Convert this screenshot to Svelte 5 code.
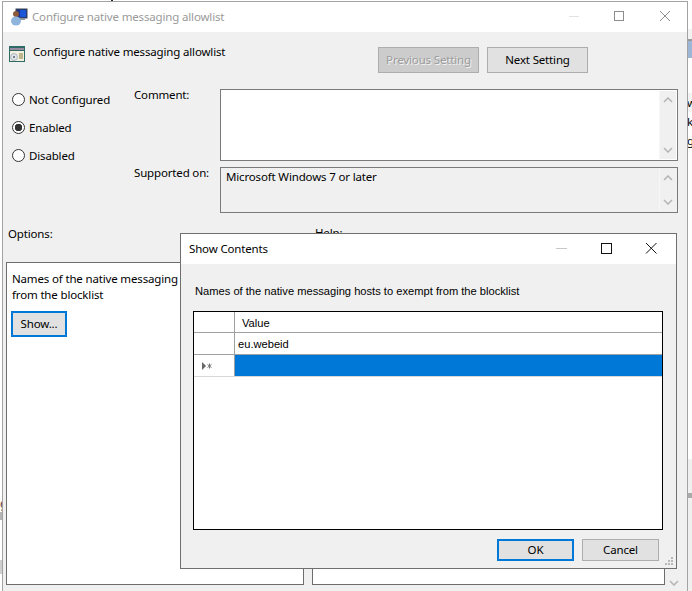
<script>
  const radios = [
    { label: 'Not Configured', on: false },
    { label: 'Enabled', on: true },
    { label: 'Disabled', on: false }
  ];
</script>

{#snippet scrollbar()}
  <div class="scroll">
    <svg width="10" height="6" viewBox="0 0 10 6"><path d="M1 5l4-4 4 4" /></svg>
    <svg width="10" height="6" viewBox="0 0 10 6"><path d="M1 1l4 4 4-4" /></svg>
  </div>
{/snippet}

<div class="desk">
  <div class="strip left">
    <div class="l1"></div><span class="frag">g</span><div class="l2"></div><div class="l3"></div>
  </div>
  <div class="strip right">
    <div class="r-head"></div>
    <div class="r-sel"></div>
    <div class="r-text"><span class="r-row">w</span><span>k</span><span>g</span></div>
    <div class="r-low"><div class="r-thumb"></div></div>
  </div>
  <div class="tick"></div>

  <section class="win main">
    <header class="bar">
      <svg class="app" width="17" height="18" viewBox="0 0 17 18">
        <rect x="5" y="1" width="11" height="9" fill="#1c2f8f" stroke="#39464f" />
        <rect x="9" y="2" width="6" height="7" fill="#1a56d8" />
        <rect x="8" y="10" width="6" height="2" fill="#8a949c" />
        <circle cx="5" cy="6" r="3" fill="#8a5a3a" />
        <ellipse cx="5" cy="13" rx="5" ry="4.5" fill="#8fb5dc" />
      </svg>
      <span class="bar-title">Configure native messaging allowlist</span>
      <div class="ctrls">
        <svg width="46" height="30" viewBox="0 0 46 30"><path d="M19 14.500h10" stroke="#e2e2e2" /></svg>
        <svg width="46" height="30" viewBox="0 0 46 30"><rect x="18.500" y="9.500" width="9" height="9" fill="none" stroke="#8c8c8c" /></svg>
        <svg width="46" height="30" viewBox="0 0 46 30"><path d="M18 9l10 10M28 9L18 19" stroke="#8c8c8c" fill="none" /></svg>
      </div>
    </header>

    <div class="head">
      <svg class="policy" width="16" height="16" viewBox="0 0 16 16">
        <rect x="0" y="0" width="16" height="16" fill="#2f6b66" />
        <rect x="1" y="2" width="14" height="2" fill="#9a8aa0" />
        <rect x="1" y="5" width="14" height="10" fill="#f3efe0" />
        <circle cx="5" cy="11" r="3.500" fill="#dfe3ea" stroke="#9aa3ad" stroke-width=".7" />
        <circle cx="5" cy="11" r="1" fill="#59616b" />
        <path d="M10 8h4M10 10h4M10 12h4" stroke="#8a7a3a" />
      </svg>
      <span class="head-title">Configure native messaging allowlist</span>
      <div class="nav">
        <button class="btn off" disabled>Previous Setting</button>
        <button class="btn">Next Setting</button>
      </div>
    </div>

    <div class="form">
      <div class="radios">
        {#each radios as r}
          <label class="radio">
            <span class="dot" class:on={r.on}></span>
            {r.label}
          </label>
        {/each}
      </div>
      <div class="labels">
        <span class="comment-label">Comment:</span>
        <span class="support-label">Supported on:</span>
      </div>
      <div class="boxes">
        <div class="box comment">{@render scrollbar()}</div>
        <div class="box support">
          <span class="support-text">Microsoft Windows 7 or later</span>
          {@render scrollbar()}
        </div>
      </div>
    </div>

    <div class="caps">
      <span class="cap-a">Options:</span>
      <span class="cap-b">Help:</span>
    </div>

    <div class="panels">
      <div class="panel opts">
        <p>Names of the native messaging hosts to exempt<br />from the blocklist</p>
        <button class="btn show focus">Show...</button>
      </div>
      <div class="panel help"></div>
      <div class="help-scroll">
        <svg width="10" height="6" viewBox="0 0 10 6"><path d="M1 1l4 4 4-4" /></svg>
      </div>
    </div>
  </section>

  <section class="win dialog">
    <header class="bar dlg-bar">
      <span class="dlg-title">Show Contents</span>
      <div class="ctrls">
        <svg width="46" height="30" viewBox="0 0 46 30"><path d="M21 14.500h11" stroke="#c8c8c8" /></svg>
        <svg width="46" height="30" viewBox="0 0 46 30"><rect x="20.500" y="9.500" width="10" height="10" fill="none" stroke="#111" /></svg>
        <svg width="46" height="30" viewBox="0 0 46 30"><path d="M19 9l10.500 10.500M29.500 9L19 19.500" stroke="#111" fill="none" /></svg>
      </div>
    </header>
    <div class="dlg-body">
      <p class="dlg-text">Names of the native messaging hosts to exempt from the blocklist</p>
      <div class="grid">
        <div class="row hdr">
          <div class="rh"></div>
          <div class="cell val">Value</div>
        </div>
        <div class="row">
          <div class="rh"></div>
          <div class="cell">eu.webeid</div>
        </div>
        <div class="row new">
          <div class="rh">
            <svg width="12" height="8" viewBox="0 0 12 8">
              <path d="M1 0l4 4-4 4z" fill="#666" />
              <path d="M8.500 1.500v5M6.500 2.500l4 3M10.500 2.500l-4 3" stroke="#777" fill="none" />
            </svg>
          </div>
          <div class="cell sel"></div>
        </div>
      </div>
      <div class="actions">
        <button class="btn act focus">OK</button>
        <button class="btn act">Cancel</button>
      </div>
    </div>
    <svg class="grip" width="9" height="9" viewBox="0 0 9 9" fill="#b8b8b8">
      <rect x="6" y="0" width="2" height="2" /><rect x="3" y="3" width="2" height="2" /><rect x="6" y="3" width="2" height="2" />
      <rect x="0" y="6" width="2" height="2" /><rect x="3" y="6" width="2" height="2" /><rect x="6" y="6" width="2" height="2" />
    </svg>
  </section>
</div>

<style>
  :global(html), :global(body) { margin: 0; height: 591px; overflow: hidden; background: #fff; }
  * { box-sizing: border-box; }
  .desk {
    position: relative; width: 692px; height: 591px; overflow: hidden;
    font: 11.5px/16px "Noto Sans", "Open Sans", sans-serif; letter-spacing: -0.16px; color: #000;
  }
  .strip { position: absolute; top: 0; height: 591px; overflow: hidden; background: #fff; }
  .strip.left { left: 0; width: 2px; display: flex; flex-direction: column; }
  .l1 { height: 32px; background: #fff; flex: none; margin-bottom: 464px; }
  .frag { font-size: 12px; height: 16px; color: #533; flex: none; }
  .l2 { height: 8px; background: #b4b4b4; flex: none; }
  .l3 { height: 14px; margin-top: 40px; background: #cfcfcf; flex: none; }
  .strip.right { right: 0; width: 4px; display: flex; flex-direction: column; }
  .r-head { margin-top: 29px; background: #f2f2f2; border-bottom: 2px solid #9a9a9a; height: 12px; flex: none; }
  .r-sel { height: 17px; background: #9db6d6; flex: none; }
  .r-text { display: flex; flex-direction: column; margin-top: 35px; line-height: 19px; margin-left: -1px; height: 366px; flex: none; }
  .r-row { background: #f3f3f3; }
  .r-low { flex: 1; background: #f0f0f0; padding-top: 34px; }
  .r-thumb { width: 4px; height: 5px; background: #aaa; }
  .tick { position: absolute; left: 111px; top: 0; width: 2px; height: 1px; background: #223; }

  .win { position: absolute; display: flex; flex-direction: column; background: #f0f0f0; overflow: hidden; }
  .main { left: 2px; top: 1px; width: 686px; height: 600px; border: 1px solid #a3a3a3; }
  .bar { display: flex; align-items: center; background: #fff; flex: none; }
  .main .bar { height: 30px; padding-left: 8px; }
  .app { flex: none; }
  .bar-title { margin-left: 4px; color: #9a9a9a; }
  .ctrls { margin-left: auto; display: flex; }
  .ctrls svg { display: block; }
  .main .ctrls { margin-right: -1px; }

  .head { display: flex; align-items: flex-start; padding: 12px 99px 0 6px; height: 55px; flex: none; }
  .policy { margin-top: 2px; flex: none; }
  .head-title { margin-left: 8px; }
  .nav { margin-left: auto; margin-top: 3px; display: flex; gap: 8px; }
  .btn {
    font: inherit; letter-spacing: inherit; color: #000; background: #e1e1e1; border: 1px solid #adadad;
    padding: 0; margin: 0; width: 101px; height: 26px;
  }
  .btn.off { background: #ccc; color: #9c9c9c; text-shadow: 1px 1px 0 #f4f4f4; }
  .btn.focus { border: 2px solid #0078d7; }

  .form { display: grid; grid-template-columns: 131px 86px 458px; flex: none; }
  .radios { display: flex; flex-direction: column; gap: 12px; padding: 5px 0 0 9px; }
  .radio { display: flex; align-items: center; gap: 4px; }
  .dot { width: 13px; height: 13px; margin-top: -1px; border: 1px solid #333; border-radius: 50%; background: #fff; flex: none; }
  .dot.on { background: radial-gradient(circle, #333 0 3.500px, #fff 4px); }
  .labels { display: flex; flex-direction: column; gap: 62px; }
  .boxes { display: flex; flex-direction: column; gap: 6px; padding-top: 2px; }
  .box { display: flex; border: 1px solid #7a7a7a; justify-content: space-between; }
  .comment { height: 72px; background: #fff; justify-content: flex-end; padding: 1px; }
  .support { height: 46px; background: #f0f0f0; padding: 1px 1px 1px 5px; }
  .scroll {
    width: 17px; background: #f0f0f0; display: flex; flex-direction: column;
    justify-content: space-between; align-items: center; padding: 6px 0;
    border-left: 1px solid #f7f7f7;
  }
  .scroll path, .help-scroll path { fill: none; stroke: #b4b4b4; stroke-width: 1.500; }

  .caps { display: flex; padding: 13px 0 0 5px; height: 49px; flex: none; }
  .cap-a { width: 307px; flex: none; }
  .cap-b { margin-top: -1px; }

  .panels { display: flex; padding-left: 3px; flex: none; }
  .panel { height: 323px; background: #fff; border: 1px solid #6d6d6d; flex: none; }
  .opts { width: 298px; padding: 8px 5px; white-space: nowrap; overflow: hidden; }
  .opts p { margin: 0; }
  .show { display: block; width: 56px; margin: 8px 0 0 -1px; }
  .help { width: 353px; margin-left: 8px; }
  .help-scroll { padding: 312px 0 0 4px; }

  .dialog { left: 180px; top: 233px; width: 497px; height: 336px; border: 1px solid #6f6f6f; }
  .dlg-bar { height: 30px; padding-left: 8px; }
  .dlg-bar .ctrls { margin-right: 3px; }
  .dlg-body { padding: 0 13px 0 12px; flex: 1; }
  .dlg-text { margin: 19px 0 12px 2px; font: 11.15px/16px "Liberation Sans", Arial, sans-serif; letter-spacing: 0; }
  .grid { height: 219px; background: #fff; border: 1px solid #000; font: 11.15px/22px "Liberation Sans", Arial, sans-serif; letter-spacing: 0; }
  .row { display: flex; height: 22px; border-bottom: 1px solid #a0a0a0; }
  .row.hdr { height: 21px; }
  .row.new { border-bottom-color: #d8d8d8; }
  .rh { width: 41px; border-right: 1px solid #a0a0a0; display: flex; align-items: center; padding-left: 7px; flex: none; }
  .cell { flex: 1; padding-left: 3px; }
  .val { padding-left: 7px; }
  .sel { background: #0078d7; }
  .actions { display: flex; justify-content: flex-end; gap: 8px; margin-top: 9px; padding-right: 4px; }
  .act { width: 77px; height: 22px; line-height: 16px; }
  .grip { position: absolute; right: 2px; bottom: 2px; }
</style>
